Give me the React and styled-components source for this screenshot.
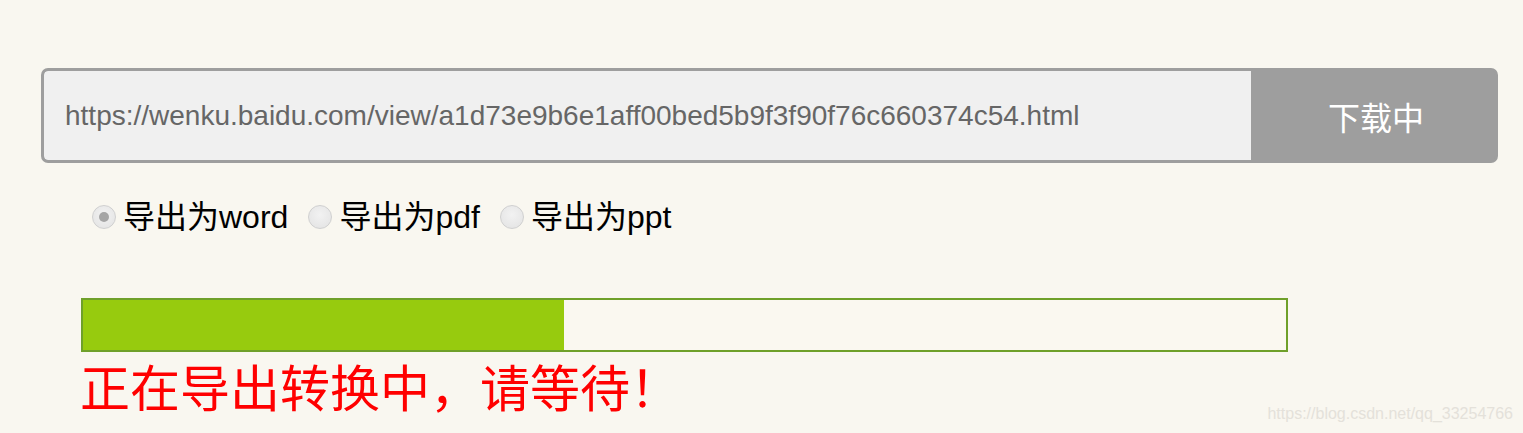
import styled, { createGlobalStyle } from 'styled-components';

const GlobalStyle = createGlobalStyle`
  html, body {
    margin: 0;
    padding: 0;
    background: #f9f7f0;
  }
  body {
    font-family: "Liberation Sans", "Noto Sans CJK SC", sans-serif;
  }
`;

const App = () => {
  const progress = 40;
  return (
    <Page>
      <GlobalStyle />
      <SearchForm>
        <UrlInput
          type="text"
          readOnly
          value="https://wenku.baidu.com/view/a1d73e9b6e1aff00bed5b9f3f90f76c660374c54.html"
        />
        <DownloadButton type="button">下载中</DownloadButton>
      </SearchForm>

      <FormatRow>
        <FormatOption>
          <Radio type="radio" name="format" defaultChecked />
          导出为word
        </FormatOption>
        <FormatOption>
          <Radio type="radio" name="format" />
          导出为pdf
        </FormatOption>
        <FormatOption>
          <Radio type="radio" name="format" />
          导出为ppt
        </FormatOption>
      </FormatRow>

      <ProgressBar>
        <ProgressFill style={{ width: `${progress}%` }} />
      </ProgressBar>
      <Status>正在导出转换中，请等待！</Status>

      <Watermark>https://blog.csdn.net/qq_33254766</Watermark>
    </Page>
  );
};

export default App;

const Page = styled.div`
  position: relative;
  width: 1523px;
  height: 433px;
  padding: 68px 0 0 41px;
  box-sizing: border-box;
  overflow: hidden;
`;

const SearchForm = styled.div`
  display: flex;
  width: 1457px;
  height: 95px;
  box-sizing: border-box;
  border: 3px solid #9e9e9e;
  border-radius: 7px;
  background: #9e9e9e;
  overflow: hidden;
`;

const UrlInput = styled.input`
  flex: 1;
  border: none;
  outline: none;
  margin: 0;
  padding: 0 0 0 21px;
  background: #f0f0f0;
  color: #666666;
  font-family: "Liberation Sans", Arial, sans-serif;
  font-size: 28px;
  border-radius: 4px 0 0 4px;
`;

const DownloadButton = styled.button`
  width: 244px;
  border: none;
  margin: 0;
  padding: 0 0 0 6px;
  background: #9e9e9e;
  color: #ffffff;
  font-family: "Noto Sans CJK SC", sans-serif;
  font-size: 32px;
  cursor: pointer;
`;

const FormatRow = styled.div`
  display: flex;
  align-items: center;
  gap: 20px;
  margin: 34px 0 0 51px;
  height: 40px;
`;

const FormatOption = styled.label`
  display: flex;
  align-items: center;
  gap: 7px;
  font-family: "Liberation Sans", "Noto Sans CJK SC", sans-serif;
  font-size: 32px;
  color: #000000;
  line-height: 40px;
`;

const Radio = styled.input`
  appearance: none;
  margin: 0;
  width: 24px;
  height: 24px;
  border-radius: 50%;
  border: 1px solid #d0d0d0;
  background: radial-gradient(circle at 50% 40%, #f2f2f2 0%, #e2e2e2 100%);
  box-sizing: border-box;
  position: relative;

  &:checked::after {
    content: '';
    position: absolute;
    left: 50%;
    top: 50%;
    width: 10px;
    height: 10px;
    margin: -5px 0 0 -5px;
    border-radius: 50%;
    background: #a5a5a5;
  }
`;

const ProgressBar = styled.div`
  width: 1207px;
  height: 54px;
  margin: 61px 0 0 40px;
  border: 2px solid #6fa02a;
  box-sizing: border-box;
  background: #faf8f0;
`;

const ProgressFill = styled.div`
  height: 100%;
  background: #97cb0e;
`;

const Status = styled.div`
  margin: 3px 0 0 39px;
  color: #ff0000;
  font-family: "Noto Sans CJK SC", sans-serif;
  font-size: 50px;
  line-height: 60px;
`;

const Watermark = styled.div`
  position: absolute;
  right: 10px;
  bottom: 10px;
  color: #e4e1da;
  font-family: "Liberation Sans", Arial, sans-serif;
  font-size: 16px;
`;
